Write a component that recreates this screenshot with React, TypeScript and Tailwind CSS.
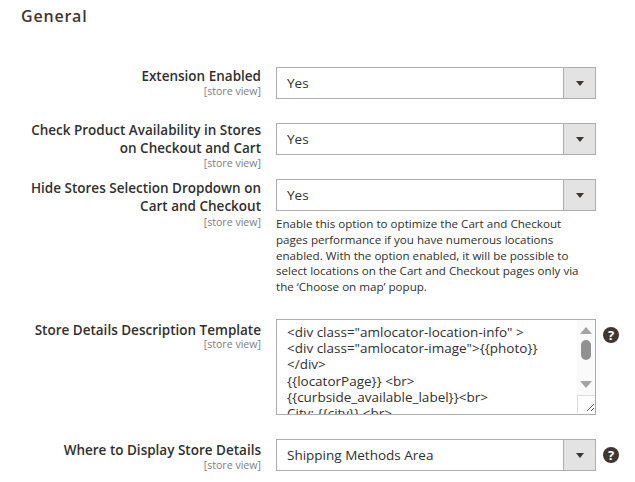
function Select({ value }: { value: string }) {
  return (
    <div className="flex h-8 w-80 border border-[#adadad] bg-white">
      <div className="flex-1 pl-2.5 text-[13.5px] leading-[30px] text-[#303030]">{value}</div>
      <div className="flex w-8 items-center justify-center border-l border-[#adadad] bg-[#e3e3e3]">
        <span className="h-0 w-0 border-x-[4.5px] border-t-[5px] border-x-transparent border-t-[#41362f]" />
      </div>
    </div>
  );
}

const HelpIcon = () => (
  <span className="ml-[7px] flex h-4 w-4 items-center justify-center rounded-full bg-[#41362f] text-[13px] leading-4 font-bold text-white">
    ?
  </span>
);

function Row({
  label,
  children,
  labelClass = "",
  scopeClass = "",
}: {
  label: React.ReactNode;
  children: React.ReactNode;
  labelClass?: string;
  scopeClass?: string;
}) {
  return (
    <div className="flex items-start">
      <div className={`w-[261px] shrink-0 text-right ${labelClass}`}>
        <div className="text-[13.5px] leading-[18px] font-semibold text-[#303030]">{label}</div>
        <div className={`text-[10.6px] leading-[14px] text-[#808080] ${scopeClass}`}>[store view]</div>
      </div>
      <div className="ml-[15px] pb-6">{children}</div>
    </div>
  );
}

const templateLines = [
  '<div class="amlocator-location-info" >',
  '<div class="amlocator-image">{{photo}}',
  "</div>",
  "{{locatorPage}} <br>",
  "{{curbside_available_label}}<br>",
  "City: {{city}} <br>",
];

function TemplateBox() {
  return (
    <div className="flex h-24 w-80 overflow-hidden border border-[#adadad] bg-white">
      <div className="flex-1 overflow-hidden pt-1 pl-2.5 text-[13.5px] leading-[16.2px] text-[#303030]">
        {templateLines.map((line) => (
          <div key={line} className="whitespace-nowrap">
            {line}
          </div>
        ))}
      </div>
      <div className="flex w-[18px] flex-col items-center bg-[#fafafa]">
        <span className="mt-[7px] h-0 w-0 border-x-[6px] border-b-[7px] border-x-transparent border-b-[#a3a3a3]" />
        <span className="mt-[6px] h-5 w-2.5 rounded-[5px] bg-[#919191]" />
        <span className="mt-[21px] h-0 w-0 border-x-[6px] border-t-[7px] border-x-transparent border-t-[#a3a3a3]" />
        <div className="mt-[7px] flex h-[18px] w-[18px] items-end justify-end border-t border-l border-[#dcdcdc] bg-white">
          <svg width="10" height="10" viewBox="0 0 10 10" className="mb-px">
            <path d="M2 9 L9 2 M6 9 L9 6" stroke="#5a5a5a" strokeWidth="1" fill="none" />
          </svg>
        </div>
      </div>
    </div>
  );
}

export default function App() {
  return (
    <div className="h-[482px] w-[635px] overflow-hidden bg-white font-['Open_Sans',sans-serif]">
      <h2 className="pt-[5px] pl-[21px] text-base leading-[22px] font-semibold tracking-[0.8px] text-[#41362f]">
        General
      </h2>
      <div className="mt-10">
        <Row scopeClass="-mt-px" label="Extension Enabled">
          <Select value="Yes" />
        </Row>
        <Row
          labelClass="-mt-0.5"
          scopeClass="-mt-px"
          label={
            <>
              Check Product Availability in Stores
              <br />
              on Checkout and Cart
            </>
          }
        >
          <Select value="Yes" />
        </Row>
        <Row
          label={
            <>
              Hide Stores Selection Dropdown on
              <br />
              Cart and Checkout
            </>
          }
        >
          <Select value="Yes" />
          <p className="mt-[5px] h-[79px] w-80 text-[11.6px] leading-[15.75px] text-[#303030]">
            Enable this option to optimize the Cart and Checkout pages performance if you have
            numerous locations enabled. With the option enabled, it will be possible to select
            locations on the Cart and Checkout pages only via the ‘Choose on map’ popup.
          </p>
        </Row>
        <Row labelClass="pt-0.5" scopeClass="-mt-0.5" label="Store Details Description Template">
          <div className="flex items-start">
            <TemplateBox />
            <span className="mt-2">
              <HelpIcon />
            </span>
          </div>
        </Row>
        <Row labelClass="pt-0.5" scopeClass="-mt-px" label="Where to Display Store Details">
          <div className="flex items-center">
            <Select value="Shipping Methods Area" />
            <HelpIcon />
          </div>
        </Row>
      </div>
    </div>
  );
}
